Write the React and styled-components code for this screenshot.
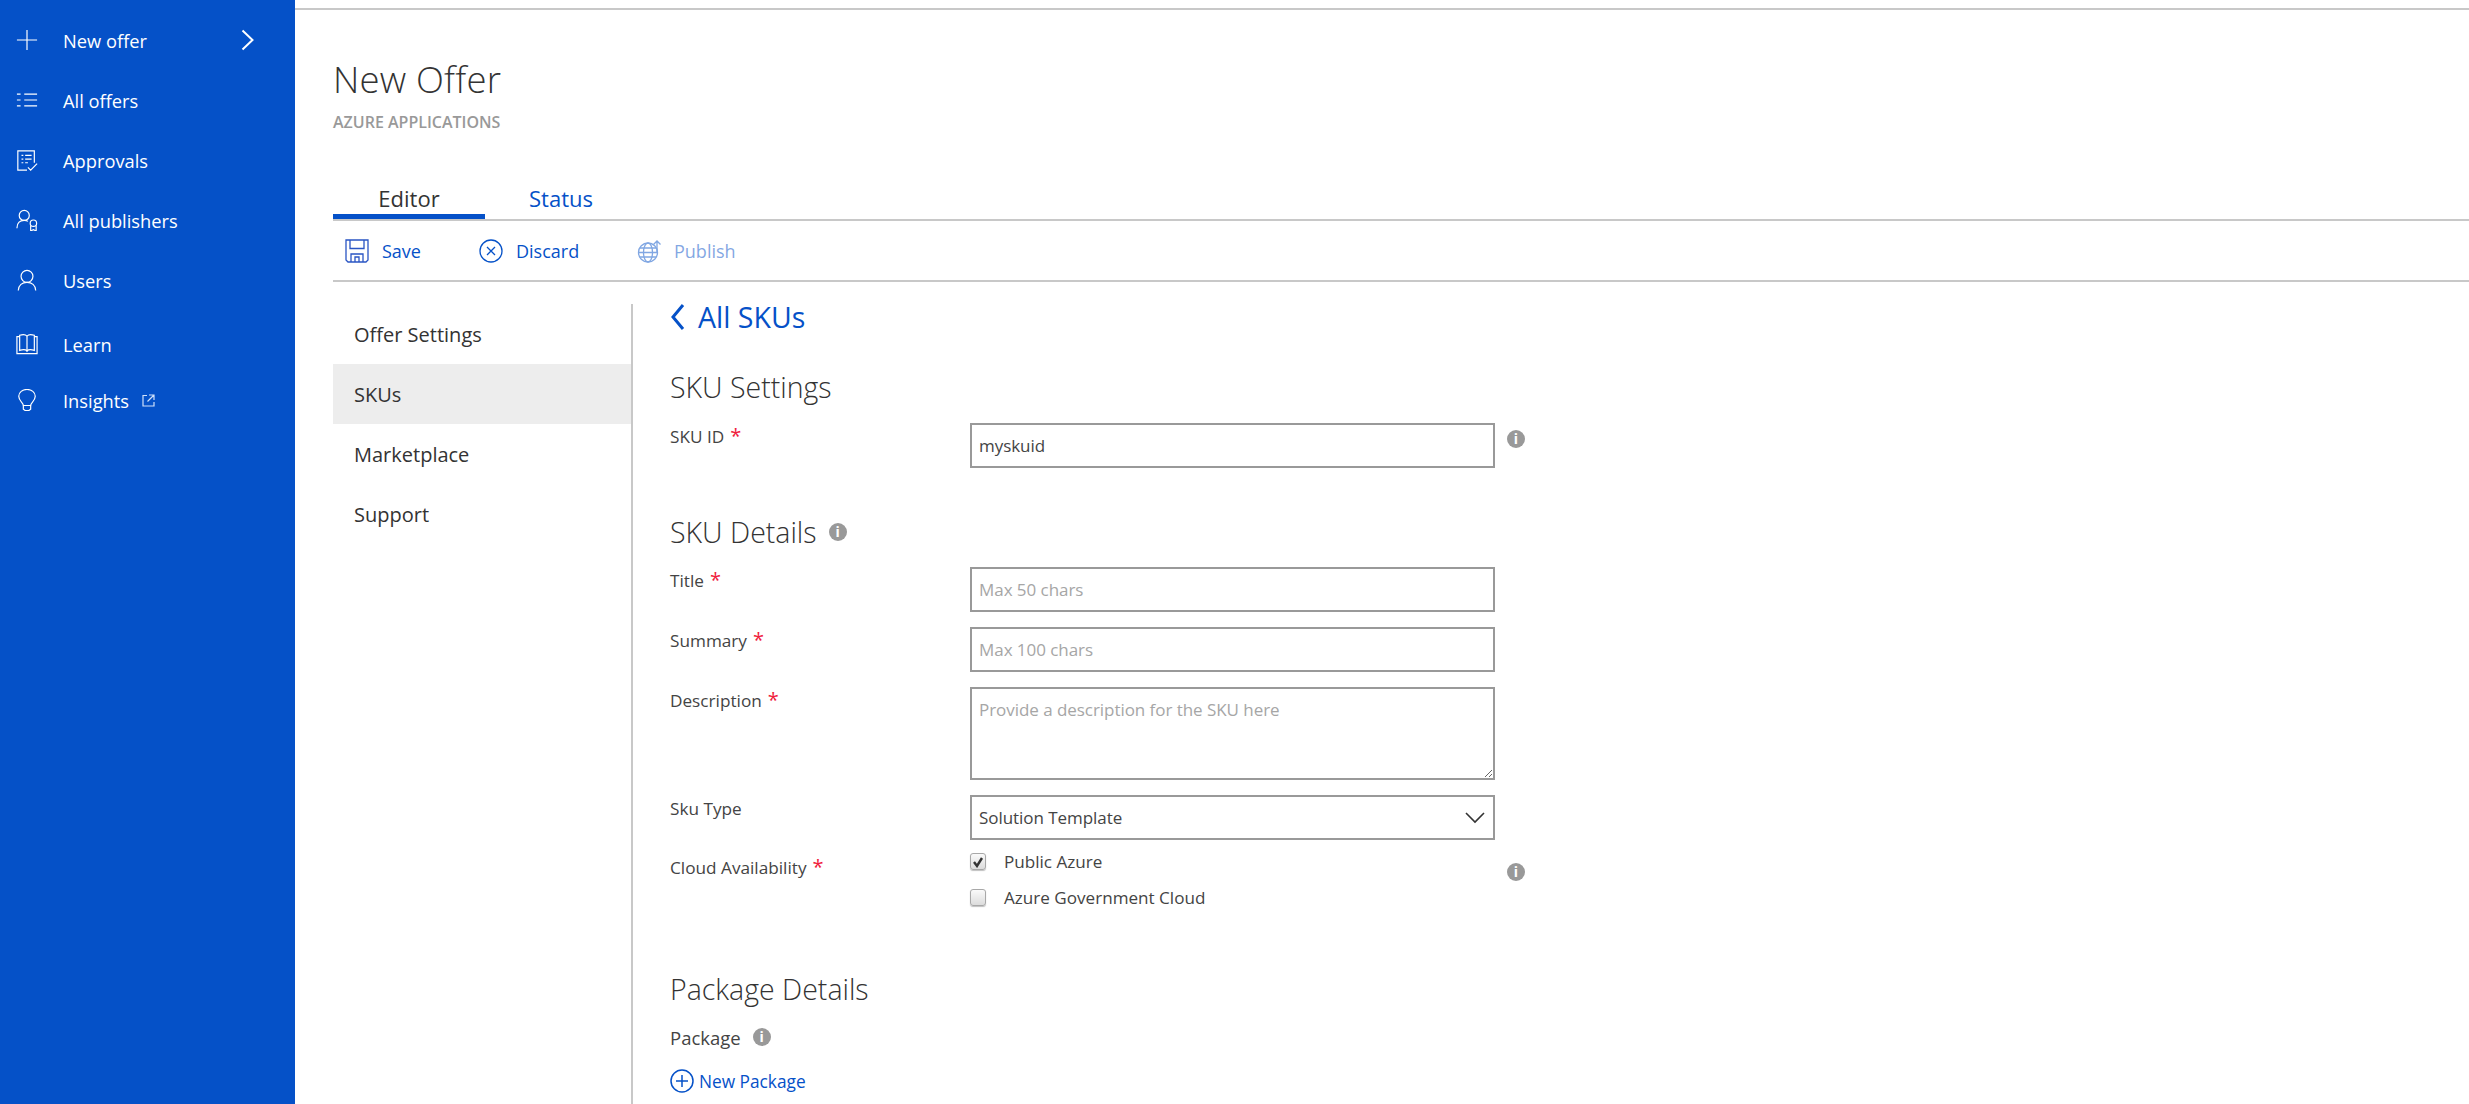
import React from "react";
import styled, { createGlobalStyle } from "styled-components";

const Global = createGlobalStyle`
  html, body { margin: 0; padding: 0; background: #fff; height: 100%; overflow: hidden; }
  body { font-family: "Open Sans", "Noto Sans", sans-serif; color: #333; }
  input::placeholder, textarea::placeholder { color: #a6a6a6; opacity: 1; }
`;

const Page = styled.div`
  display: flex;
  width: 2469px;
  height: 1104px;
  overflow: hidden;
`;

const Sidebar = styled.nav`
  flex: 0 0 295px;
  background: #0551c8;
  padding-top: 10px;
  box-sizing: border-box;
`;

const NavRow = styled.div`
  display: flex;
  align-items: center;
  height: 60px;
  margin-bottom: ${(p) => p.$after || 0}px;
  color: #fff;
  font-size: 18.3px;
  padding-left: 16px;
`;

const NavIcon = styled.span`
  display: flex;
  width: 47px;
  flex: none;
`;

const NavArrow = styled.span`
  display: flex;
  margin-left: auto;
  margin-right: 41px;
`;

const ExtLink = styled.span`
  display: flex;
  margin-left: 13px;
`;

const Main = styled.main`
  flex: 1;
  min-width: 0;
  display: flex;
  flex-direction: column;
`;

const TopRule = styled.div`
  flex: none;
  height: 2px;
  margin-top: 8px;
  background: #c8c8c8;
`;

const Body = styled.div`
  flex: none;
  padding-left: 38px;
  display: flex;
  flex-direction: column;
`;

const Title = styled.h1`
  margin: 45px 0 0;
  font-size: 36.5px;
  line-height: 48px;
  font-weight: 300;
  letter-spacing: 0.2px;
  color: #333;
`;

const Sub = styled.div`
  margin-top: 9px;
  font-size: 16px;
  line-height: 20px;
  font-weight: 600;
  color: #999;
`;

const Tabs = styled.div`
  display: flex;
  margin-top: 41px;
  height: 46px;
  border-bottom: 2px solid #c8c8c8;
  box-sizing: content-box;
`;

const Tab = styled.div`
  width: 152px;
  height: 46px;
  box-sizing: border-box;
  text-align: center;
  font-size: 22px;
  line-height: 50px;
  color: ${(p) => (p.$active ? "#333" : "#0551c8")};
  border-bottom: 5px solid ${(p) => (p.$active ? "#0551c8" : "transparent")};
`;

const Toolbar = styled.div`
  display: flex;
  align-items: center;
  height: 59px;
  padding-left: 12px;
  gap: 36px;
  border-bottom: 2px solid #c8c8c8;
`;

const ToolBtn = styled.div`
  display: flex;
  align-items: center;
  gap: 13px;
  width: ${(p) => p.$w}px;
  font-size: 18px;
  color: #0551c8;
  opacity: ${(p) => (p.$disabled ? 0.5 : 1)};
`;

const Columns = styled.div`
  display: flex;
  margin-top: 22px;
`;

const SideTabs = styled.div`
  flex: 0 0 300px;
  height: 820px;
  box-sizing: border-box;
  border-right: 2px solid #c8c8c8;
`;

const SideTab = styled.div`
  height: 60px;
  display: flex;
  align-items: center;
  padding-left: 21px;
  font-size: 20px;
  color: #333;
  background: ${(p) => (p.$active ? "#ededed" : "transparent")};
`;

const Content = styled.div`
  flex: 1;
  padding-left: 37px;
`;

const BackLink = styled.div`
  display: flex;
  align-items: center;
  gap: 13px;
  height: 26px;
  font-size: 28.5px;
  color: #0551c8;
`;

const Heading = styled.h2`
  display: flex;
  align-items: center;
  gap: 12px;
  margin: ${(p) => p.$top}px 0 ${(p) => p.$bottom}px;
  height: 36px;
  font-size: 28.5px;
  font-weight: 300;
  color: #333;
`;

const FormRow = styled.div`
  display: flex;
  align-items: flex-start;
  margin-bottom: ${(p) => p.$after ?? 15}px;
`;

const Label = styled.div`
  flex: 0 0 300px;
  padding-top: ${(p) => p.$top ?? 4}px;
  font-size: 17.2px;
  line-height: 20px;
  color: #444;
`;

const Star = styled.span`
  color: #f0203c;
  margin-left: 6px;
  font-size: 20px;
  line-height: 16px;
`;

const baseField = `
  box-sizing: border-box;
  width: 525px;
  border: 2px solid #999;
  background: #fff;
  padding: 0 7px;
  margin: 0;
  font-family: "Open Sans", "Noto Sans", sans-serif;
  font-size: 17px;
  letter-spacing: -0.05px;
  color: #444;
  outline: none;
  border-radius: 0;
`;

const TextField = styled.input`
  ${baseField}
  height: 45px;
`;

const TextArea = styled.textarea`
  ${baseField}
  height: 93px;
  padding-top: 9px;
  display: block;
  resize: vertical;
`;

const SelectBox = styled.div`
  ${baseField}
  height: 45px;
  display: flex;
  align-items: center;
  justify-content: space-between;
  padding-right: 8px;
`;

const InfoDot = styled.span`
  flex: none;
  display: inline-flex;
  align-items: center;
  justify-content: center;
  width: 18px;
  height: 18px;
  margin-left: ${(p) => p.$left ?? 0}px;
  margin-top: ${(p) => p.$top ?? 0}px;
  border-radius: 50%;
  background: #999;
  color: #fff;
  font-size: 14px;
  font-weight: 700;
  line-height: 18px;
  font-family: "Open Sans", sans-serif;
`;

const Checks = styled.div`
  width: 525px;
  display: flex;
  flex-direction: column;
  gap: 15px;
`;

const CheckRow = styled.div`
  display: flex;
  align-items: center;
  gap: 18px;
  height: 21px;
  font-size: 17.1px;
  color: #444;
`;

const CheckBox = styled.span`
  flex: none;
  display: flex;
  align-items: center;
  justify-content: center;
  width: 16px;
  height: 17px;
  box-sizing: border-box;
  border-radius: 3px;
  border: 1px solid #a8a8a8;
  background: linear-gradient(#fafafa, #dcdcdc);
  box-shadow: 0 1px 1px rgba(0, 0, 0, 0.25);
`;

const PackageLabel = styled.div`
  display: flex;
  align-items: center;
  gap: 12px;
  height: 24px;
  margin-top: 18px;
  font-size: 18.5px;
  color: #444;
`;

const AddLink = styled.div`
  display: flex;
  align-items: center;
  gap: 5px;
  margin-top: 20px;
  height: 24px;
  font-size: 17.3px;
  color: #0551c8;
`;

const S = ({ w = 24, h = 24, vb, children, sw = 1.3, c = "#fff" }) => (
  <svg width={w} height={h} viewBox={vb || `0 0 ${w} ${h}`} fill="none" stroke={c} strokeWidth={sw}>
    {children}
  </svg>
);

const N = ({ children }) => (
  <S w={22} h={22} vb="0 0 24 24">
    {children}
  </S>
);

const icons = {
  plus: (
    <N>
      <path d="M1 12h22M12 1v22" />
    </N>
  ),
  list: (
    <N>
      <path d="M1 5.500h4M9 5.500h14M1 12h4M9 12h14M1 18.500h4M9 18.500h14" />
    </N>
  ),
  approvals: (
    <N>
      <path d="M20 15V2H2v21h10" />
      <path d="M6 7h2M10 7h7M6 11h2M10 11h7M6 15h2M10 15h3M13 20l3 3 7-7" />
    </N>
  ),
  publisher: (
    <N>
      <circle cx="9" cy="7" r="5.500" />
      <path d="M1 21c0-6 3.500-8.500 8-8.500 1.500 0 3 .3 4 1" />
      <circle cx="19" cy="15.500" r="3.500" />
      <path d="M16 18v6l3-1.500 3 1.500v-6" />
    </N>
  ),
  user: (
    <N>
      <circle cx="12" cy="8" r="6.500" />
      <path d="M2.500 23.500c0-6 4.500-9 9.500-9s9.500 3 9.500 9" />
    </N>
  ),
  book: (
    <N>
      <path d="M4 4H1v18.500h22V4h-3" />
      <path d="M4 2.500c3-1 6.500-1 8 1v16c-1.500-1.500-5-1.500-8-.500zM20 2.500c-3-1-6.500-1-8 1v16c1.500-1.500 5-1.500 8-.500z" />
    </N>
  ),
  bulb: (
    <N>
      <path d="M8 18c0-3-5-5-5-10 0-4.500 4-7.500 9-7.500s9 3 9 7.500c0 5-5 7-5 10z" />
      <path d="M8 18v4l2 1.500h4l2-1.500v-4" />
    </N>
  ),
};

const Save = () => (
  <S c="#2a55c4" vb="0 0 24 24">
    <path d="M1 1h22v20l-2 2H3l-2-2z" />
    <path d="M5 1v8.500h14V1M6 23v-8h12v8M10 23v-5h4v5" />
  </S>
);

const Discard = () => (
  <S c="#0551c8" vb="0 0 24 24">
    <circle cx="12" cy="12" r="11" />
    <path d="M8 8l8 8M16 8l-8 8" />
  </S>
);

const Publish = () => (
  <S c="#0551c8" vb="0 0 24 24">
    <circle cx="11" cy="13.500" r="9.500" />
    <ellipse cx="11" cy="13.500" rx="4.500" ry="9.500" />
    <path d="M1.500 13.500h19M2.800 9h16.400M2.800 18h16.400" />
    <path d="M20 13V2M16.500 5.500L20 2l3.500 3.500" />
  </S>
);

const nav = [
  ["plus", "New offer"],
  ["list", "All offers"],
  ["approvals", "Approvals"],
  ["publisher", "All publishers"],
  ["user", "Users", 4],
  ["book", "Learn", -4],
  ["bulb", "Insights"],
];

const Info = (p) => <InfoDot {...p}>i</InfoDot>;

export default function App() {
  return (
    <Page>
      <Global />
      <Sidebar>
        {nav.map(([ic, label, after]) => (
          <NavRow key={label} $after={after}>
            <NavIcon>{icons[ic]}</NavIcon>
            {label}
            {ic === "plus" && (
              <NavArrow>
                <S w={13} h={22} sw={2}>
                  <path d="M1.500 1.500l10 9.500-10 9.500" />
                </S>
              </NavArrow>
            )}
            {ic === "bulb" && (
              <ExtLink>
                <S w={13} h={13} sw={1.2} c="#cfe0fa">
                  <path d="M5 1.500H1v10.500h11V8M7 1h5v5M12 1L5.500 7.500" />
                </S>
              </ExtLink>
            )}
          </NavRow>
        ))}
      </Sidebar>
      <Main>
        <TopRule />
        <Body>
          <Title>New Offer</Title>
          <Sub>AZURE APPLICATIONS</Sub>
          <Tabs>
            <Tab $active>Editor</Tab>
            <Tab>Status</Tab>
          </Tabs>
          <Toolbar>
            <ToolBtn $w={98}>
              <Save />
              Save
            </ToolBtn>
            <ToolBtn $w={122}>
              <Discard />
              Discard
            </ToolBtn>
            <ToolBtn $w={120} $disabled>
              <Publish />
              Publish
            </ToolBtn>
          </Toolbar>
          <Columns>
            <SideTabs>
              <SideTab>Offer Settings</SideTab>
              <SideTab $active>SKUs</SideTab>
              <SideTab>Marketplace</SideTab>
              <SideTab>Support</SideTab>
            </SideTabs>
            <Content>
              <BackLink>
                <S w={15} h={28} sw={3} c="#0551c8">
                  <path d="M13 2L3 14l10 12" />
                </S>
                All SKUs
              </BackLink>
              <Heading $top={39} $bottom={18}>SKU Settings</Heading>
              <FormRow $after={46}>
                <Label>
                  SKU ID<Star>*</Star>
                </Label>
                <TextField defaultValue="myskuid" />
                <Info $left={12} $top={7} />
              </FormRow>
              <Heading $top={0} $bottom={17}>
                SKU Details <Info />
              </Heading>
              <FormRow>
                <Label>
                  Title<Star>*</Star>
                </Label>
                <TextField placeholder="Max 50 chars" />
              </FormRow>
              <FormRow>
                <Label>
                  Summary<Star>*</Star>
                </Label>
                <TextField placeholder="Max 100 chars" />
              </FormRow>
              <FormRow>
                <Label>
                  Description<Star>*</Star>
                </Label>
                <TextArea placeholder="Provide a description for the SKU here" />
              </FormRow>
              <FormRow $after={11}>
                <Label>Sku Type</Label>
                <SelectBox>
                  Solution Template
                  <S w={20} h={12} sw={1.6} c="#333">
                    <path d="M1 1l9 9 9-9" />
                  </S>
                </SelectBox>
              </FormRow>
              <FormRow $after={63}>
                <Label $top={7}>
                  Cloud Availability<Star>*</Star>
                </Label>
                <Checks>
                  <CheckRow>
                    <CheckBox>
                      <S w={12} h={12} sw={2.4} c="#333">
                        <path d="M2 6l3 4 5-8" />
                      </S>
                    </CheckBox>
                    Public Azure
                  </CheckRow>
                  <CheckRow>
                    <CheckBox />
                    Azure Government Cloud
                  </CheckRow>
                </Checks>
                <Info $left={12} $top={12} />
              </FormRow>
              <Heading $top={0} $bottom={0}>Package Details</Heading>
              <PackageLabel>
                Package <Info />
              </PackageLabel>
              <AddLink>
                <S w={24} h={24} sw={1.5} c="#0551c8">
                  <circle cx="12" cy="12" r="11" />
                  <path d="M6 12h12M12 6v12" />
                </S>
                New Package
              </AddLink>
            </Content>
          </Columns>
        </Body>
      </Main>
    </Page>
  );
}
